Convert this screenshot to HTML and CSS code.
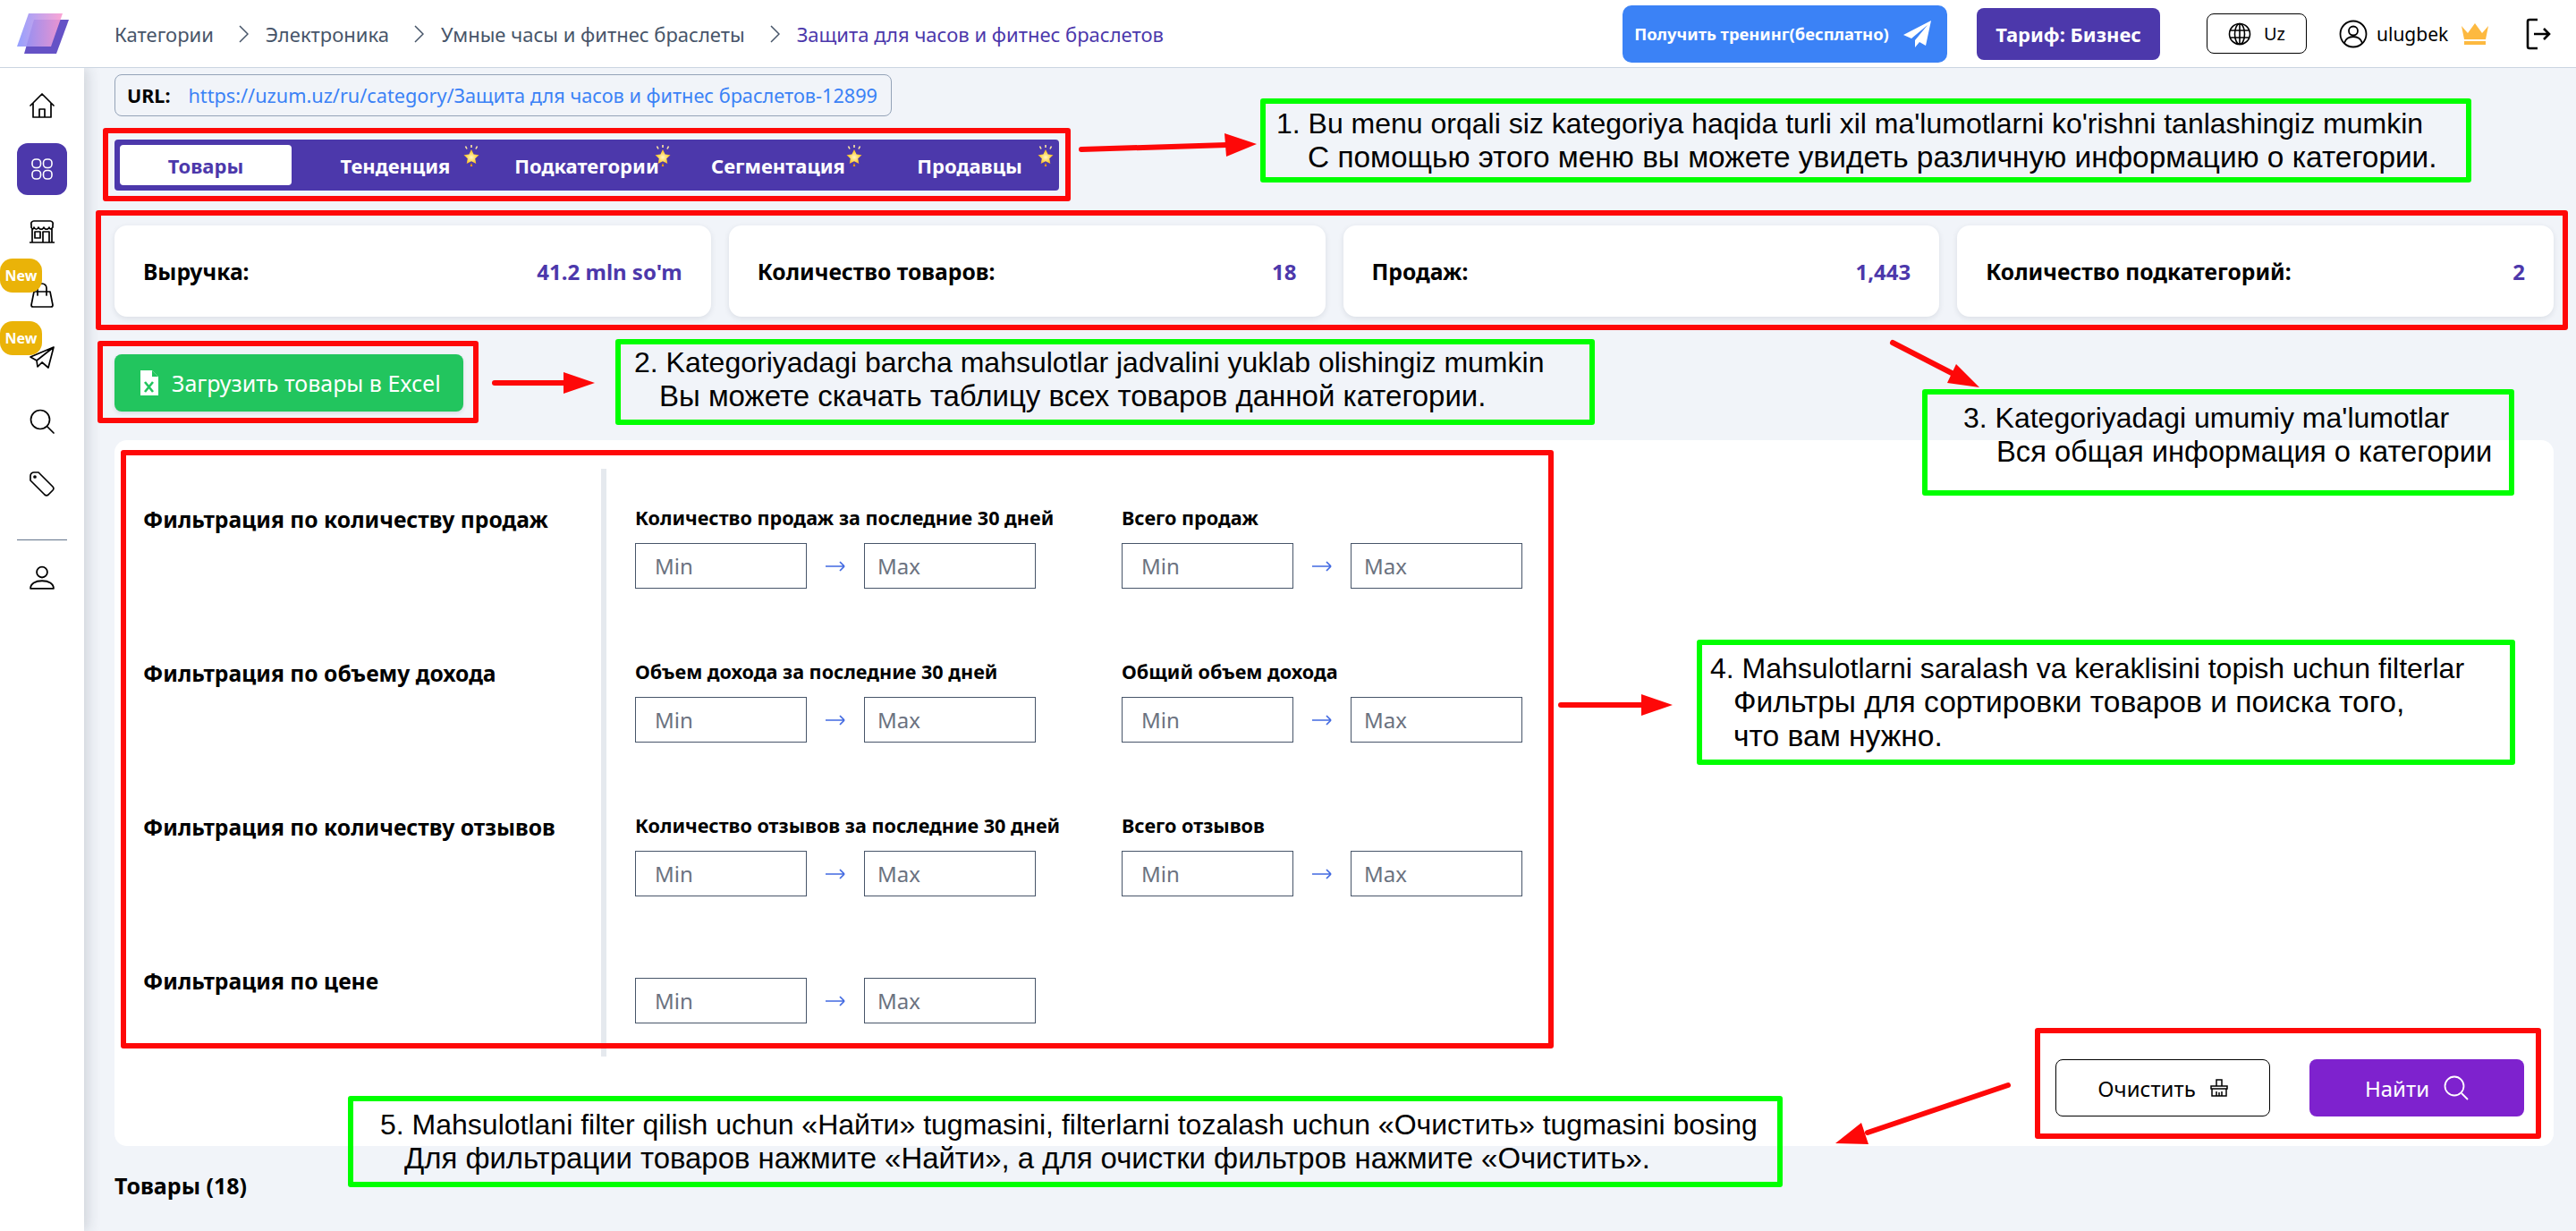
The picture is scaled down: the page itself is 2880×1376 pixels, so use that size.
FILE: index.html
```html
<!DOCTYPE html>
<html lang="ru">
<head>
<meta charset="utf-8">
<title>Защита для часов и фитнес браслетов</title>
<link rel="stylesheet" href="styles.css">
</head>
<body>
<svg class="defs" width="0" height="0">
  <defs>
    <linearGradient id="lg" x1="0" x2="1" y1="0" y2="0"><stop offset="0" stop-color="#8896ff"/><stop offset="1" stop-color="#fb9bd0"/></linearGradient>
    <radialGradient id="sg" cx=".5" cy=".55" r=".6"><stop offset="0" stop-color="#fff6c8"/><stop offset=".55" stop-color="#ffd54a"/><stop offset="1" stop-color="#f59e0b"/></radialGradient>
    <symbol id="star" viewBox="0 0 20 24">
      <path d="M10 5l2.6 5.4 5.9.8-4.3 4 1.1 5.8L10 18.2 4.7 21l1.1-5.8-4.3-4 5.9-.8z" fill="url(#sg)"/>
      <path d="M10 0v3M3.5 1.5l1.5 3M16.5 1.5l-1.5 3" stroke="#ffe9a0" stroke-width="1.6" fill="none"/>
      <path d="M10 20l1.3 4H8.7z" fill="#f59e0b"/>
    </symbol>
    <symbol id="rarrow" viewBox="0 0 22 12">
      <path d="M0 6h21M16 1l5 5" stroke="#4169e1" stroke-width="1.7" fill="none"/>
      <path d="M21 6l-5 5" stroke="#4169e1" stroke-width="1.7" fill="none"/>
    </symbol>
  </defs>
</svg>
<div class="page">
  <header class="topbar">
    <svg class="logo" viewBox="0 0 58 45"><path d="M19 7H58L44 45H8Z" fill="#6552c6"/><path d="M13 0H51L38 37H0Z" fill="url(#lg)" opacity=".9"/></svg>
    <nav class="crumbs">
      <span>Категории</span>
      <svg class="chev" viewBox="0 0 12 20"><path d="M2 1l9 9-9 9"/></svg>
      <span>Электроника</span>
      <svg class="chev" viewBox="0 0 12 20"><path d="M2 1l9 9-9 9"/></svg>
      <span>Умные часы и фитнес браслеты</span>
      <svg class="chev" viewBox="0 0 12 20"><path d="M2 1l9 9-9 9"/></svg>
      <span class="crumb-current">Защита для часов и фитнес браслетов</span>
    </nav>
    <div class="top-actions">
      <a class="btn-training">Получить тренинг(бесплатно)
        <svg class="plane-w" viewBox="0 0 32 32"><path d="M31 1L0 17l9 4L27 6 13 23v8l5-6 7 4z" fill="#fff"/></svg>
      </a>
      <a class="btn-tariff">Тариф: Бизнес</a>
      <a class="btn-lang">
        <svg class="ic-globe" viewBox="0 0 26 26"><circle cx="13" cy="13" r="11.5"/><ellipse cx="13" cy="13" rx="5.5" ry="11.5"/><path d="M13 1.5v23M2 9h22M2 17h22"/></svg>
        Uz
      </a>
      <svg class="ic-user" viewBox="0 0 32 32"><circle cx="16" cy="16" r="14.5"/><circle cx="16" cy="12.5" r="5"/><path d="M6 26c2-6 6-7 10-7s8 1 10 7"/></svg>
      <span class="user-name">ulugbek</span>
      <svg class="ic-crown" viewBox="0 0 30 24"><path d="M0 3l7 8 8-11 8 11 7-8-3 15H3z" fill="#fdb940"/><rect x="3" y="20" width="24" height="4" fill="#fdb940"/></svg>
      <svg class="ic-logout" viewBox="0 0 28 36"><path d="M13 2H4a2 2 0 0 0-2 2v28a2 2 0 0 0 2 2h9M9 18h17M20 12l6 6-6 6"/></svg>
    </div>
  </header>

  <div class="body-row">
    <aside class="sidebar">
      <div class="side-item"><svg class="side-ic" viewBox="0 0 28 28"><path d="M1 14L14 1l13 13M4 11v16h20V11M11 27v-9h6v9"/></svg></div>
      <div class="side-item"><span class="side-active"><svg class="grid-ic" viewBox="0 0 24 24"><rect x="1" y="1" width="9.5" height="9.5" rx="4"/><rect x="13.5" y="1" width="9.5" height="9.5" rx="4"/><rect x="1" y="13.5" width="9.5" height="9.5" rx="4"/><rect x="13.5" y="13.5" width="9.5" height="9.5" rx="4"/></svg></span></div>
      <div class="side-item"><svg class="side-ic" viewBox="0 0 28 26"><path d="M0 25h28M3 25V10M25 25V10M2 5a3 3 0 0 1 3-4h18a3 3 0 0 1 3 4v3c-2 3-4 2-4 0-1 3-5 3-6 0-1 3-5 3-6 0-1 3-4 3-5 0 0 2-2 3-3 0zM15 25V13h7v12M6 13h6v7H6z"/></svg></div>
      <div class="side-item">
        <span class="badge-new">New</span>
        <svg class="side-ic" viewBox="0 0 28 28"><path d="M5 10h18l3 15a2 2 0 0 1-2 2H4a2 2 0 0 1-2-2zM9 14V6a5 5 0 0 1 10 0v8"/></svg>
      </div>
      <div class="side-item">
        <span class="badge-new">New</span>
        <svg class="side-ic" viewBox="0 0 28 26"><path d="M27 1L1 12l7 4zM27 1L8 16l1 7 5-5 7 6z"/></svg>
      </div>
      <div class="side-item"><svg class="side-ic" viewBox="0 0 28 28"><circle cx="12" cy="12" r="10.5"/><path d="M20 20l7 7"/></svg></div>
      <div class="side-item"><svg class="side-ic" viewBox="0 0 28 28"><path d="M1 5a4 4 0 0 1 4-4h5l16 16a3 3 0 0 1 0 4l-5 5a3 3 0 0 1-4 0L1 10z"/><circle cx="6" cy="6" r="1"/></svg></div>
      <hr class="side-sep">
      <div class="side-item side-last"><svg class="side-ic" viewBox="0 0 26 26"><circle cx="13" cy="7" r="5.5"/><path d="M1 24c0-5 5-8 12-8s12 3 12 8z"/></svg></div>
    </aside>

    <main class="content">
      <div class="url-box"><b>URL:</b><a class="url-link">https://uzum.uz/ru/category/Защита для часов и фитнес браслетов-12899</a></div>

      <div class="tabs">
        <a class="tab tab-active">Товары</a>
        <a class="tab">Тенденция<svg class="star"><use href="#star"/></svg></a>
        <a class="tab">Подкатегории<svg class="star"><use href="#star"/></svg></a>
        <a class="tab">Сегментация<svg class="star"><use href="#star"/></svg></a>
        <a class="tab">Продавцы<svg class="star"><use href="#star"/></svg></a>
      </div>

      <section class="stats">
        <div class="stat"><b class="stat-name">Выручка:</b><b class="stat-val">41.2 mln so'm</b></div>
        <div class="stat"><b class="stat-name">Количество товаров:</b><b class="stat-val">18</b></div>
        <div class="stat"><b class="stat-name">Продаж:</b><b class="stat-val">1,443</b></div>
        <div class="stat"><b class="stat-name">Количество подкатегорий:</b><b class="stat-val">2</b></div>
      </section>

      <a class="btn-excel">
        <svg class="ic-excel" viewBox="0 0 20 28"><path d="M0 0h13l7 7v21H0z" fill="#fff"/><path d="M13 0v7h7" fill="#22c55e"/><path d="M5 13l9 11M14 13L5 24" stroke="#22c55e" stroke-width="2.6" fill="none"/></svg>
        Загрузить товары в Excel
      </a>

      <section class="filter-card">
        <div class="f-row">
          <b class="f-title">Фильтрация по количеству продаж</b>
          <div class="f-fields">
            <div class="f-group"><b class="f-label">Количество продаж за последние 30 дней</b><div class="range"><input class="f-input" placeholder="Min"><svg class="range-arrow"><use href="#rarrow"/></svg><input class="f-input f-max" placeholder="Max"></div></div>
            <div class="f-group"><b class="f-label">Всего продаж</b><div class="range"><input class="f-input" placeholder="Min"><svg class="range-arrow"><use href="#rarrow"/></svg><input class="f-input f-max" placeholder="Max"></div></div>
          </div>
        </div>
        <div class="f-row">
          <b class="f-title">Фильтрация по объему дохода</b>
          <div class="f-fields">
            <div class="f-group"><b class="f-label">Объем дохода за последние 30 дней</b><div class="range"><input class="f-input" placeholder="Min"><svg class="range-arrow"><use href="#rarrow"/></svg><input class="f-input f-max" placeholder="Max"></div></div>
            <div class="f-group"><b class="f-label">Общий объем дохода</b><div class="range"><input class="f-input" placeholder="Min"><svg class="range-arrow"><use href="#rarrow"/></svg><input class="f-input f-max" placeholder="Max"></div></div>
          </div>
        </div>
        <div class="f-row">
          <b class="f-title">Фильтрация по количеству отзывов</b>
          <div class="f-fields">
            <div class="f-group"><b class="f-label">Количество отзывов за последние 30 дней</b><div class="range"><input class="f-input" placeholder="Min"><svg class="range-arrow"><use href="#rarrow"/></svg><input class="f-input f-max" placeholder="Max"></div></div>
            <div class="f-group"><b class="f-label">Всего отзывов</b><div class="range"><input class="f-input" placeholder="Min"><svg class="range-arrow"><use href="#rarrow"/></svg><input class="f-input f-max" placeholder="Max"></div></div>
          </div>
        </div>
        <div class="f-row f-row-last">
          <b class="f-title">Фильтрация по цене</b>
          <div class="f-fields">
            <div class="f-group"><div class="range"><input class="f-input" placeholder="Min"><svg class="range-arrow"><use href="#rarrow"/></svg><input class="f-input f-max" placeholder="Max"></div></div>
          </div>
        </div>
        <div class="f-actions">
          <a class="btn-clear">Очистить
            <svg class="ic-broom" viewBox="0 0 20 20"><path d="M7 8V1h6v7M1 8h18v3H1zM2 11v8h16v-8M7 19v-5M10 19v-4M13 19v-5"/></svg>
          </a>
          <a class="btn-find">Найти
            <svg class="ic-find" viewBox="0 0 28 28"><circle cx="12" cy="12" r="10.5"/><path d="M20 20l7 7"/></svg>
          </a>
        </div>
      </section>

      <h2 class="list-title">Товары (18)</h2>
    </main>
  </div>

  <!-- Annotation layer drawn over the screenshot -->
  <div class="note-red r1"></div>
  <div class="note-red r2"></div>
  <div class="note-red r3"></div>
  <div class="note-red r4"></div>
  <div class="note-red r5"></div>

  <svg class="arrows" viewBox="0 0 2880 1376">
    <path d="M1209 167L1372 162"/><polygon points="1369,149 1405,161 1371,175"/>
    <path d="M553 428H632"/><polygon points="630,416 665,428 630,440"/>
    <path d="M2116 383L2184 418"/><polygon points="2187,407 2213,433 2177,428"/>
    <path d="M1745 788H1838"/><polygon points="1835,776 1870,788 1835,800"/>
    <path d="M2245 1213L2088 1266"/><polygon points="2081,1255 2052,1278 2089,1279"/>
  </svg>

  <div class="note-green g1"><p>1. Bu menu orqali siz kategoriya haqida turli xil ma'lumotlarni ko'rishni tanlashingiz mumkin</p><p class="i1">С помощью этого меню вы можете увидеть различную информацию о категории.</p></div>
  <div class="note-green g2"><p>2. Kategoriyadagi barcha mahsulotlar jadvalini yuklab olishingiz mumkin</p><p class="i2">Вы можете скачать таблицу всех товаров данной категории.</p></div>
  <div class="note-green g3"><p>3. Kategoriyadagi umumiy ma'lumotlar</p><p class="i3">Вся общая информация о категории</p></div>
  <div class="note-green g4"><p>4. Mahsulotlarni saralash va keraklisini topish uchun filterlar</p><p class="i4">Фильтры для сортировки товаров и поиска того,</p><p class="i4">что вам нужно.</p></div>
  <div class="note-green g5"><p>5. Mahsulotlani filter qilish uchun «Найти» tugmasini, filterlarni tozalash uchun «Очистить» tugmasini bosing</p><p class="i5">Для фильтрации товаров нажмите «Найти», а для очистки фильтров нажмите «Очистить».</p></div>
</div>
</body>
</html>
```
FILE: styles.css
```css
* { box-sizing: border-box; }
html, body { margin: 0; padding: 0; }
body { width: 2880px; height: 1376px; overflow: hidden; background: #f1f4f9; font-family: "Noto Sans", "Open Sans", sans-serif; color: #000; }
.defs { position: absolute; }
.page { position: relative; width: 2880px; height: 1376px; overflow: hidden; display: flex; flex-direction: column; }

.topbar { height: 76px; flex: none; background: #fff; border-bottom: 1px solid #cbd5e1; display: flex; align-items: center; position: relative; z-index: 2; padding-left: 19px; padding-right: 28px; }
.logo { width: 58px; height: 45px; flex: none; }
.crumbs { display: flex; align-items: center; margin-left: 51px; font-size: 22px; color: #475569; }
.chev { width: 12px; height: 20px; fill: none; stroke: #475569; stroke-width: 1.5; margin: 0 19px 0 27px; }
.crumb-current { color: #4c38ab; }
.top-actions { margin-left: auto; display: flex; align-items: center; }
.btn-training { width: 363px; height: 64px; background: #3b82f6; color: #fff; font-weight: 700; font-size: 18.4px; border-radius: 10px; display: flex; align-items: center; justify-content: center; gap: 16px; padding-right: 4px; }
.plane-w { width: 32px; height: 32px; }
.btn-tariff { width: 205px; height: 58px; margin-left: 33px; background: #4c38ab; color: #fff; font-weight: 700; font-size: 22px; border-radius: 8px; display: flex; align-items: center; justify-content: center; }
.btn-lang { width: 112px; height: 45px; margin-left: 52px; background: #fff; border: 1px solid #000; border-radius: 8px; font-size: 20px; display: flex; align-items: center; justify-content: center; gap: 14px; }
.ic-globe { width: 26px; height: 26px; fill: none; stroke: #000; stroke-width: 1.6; }
.ic-user { width: 32px; height: 32px; margin-left: 36px; fill: none; stroke: #000; stroke-width: 1.8; }
.user-name { font-size: 21px; margin-left: 10px; width: 84px; }
.ic-crown { width: 30px; height: 24px; margin-left: 11px; }
.ic-logout { width: 28px; height: 36px; margin-left: 42px; fill: none; stroke: #000; stroke-width: 2.6; }

.body-row { flex: 1; display: flex; min-height: 0; }
.sidebar { width: 94px; flex: none; background: #fff; box-shadow: 4px 0 14px rgba(30, 41, 59, .16); padding-top: 7px; display: flex; flex-direction: column; position: relative; z-index: 1; }
.side-item { height: 70.5px; flex: none; display: flex; align-items: center; justify-content: center; position: relative; }
.side-ic { width: 28px; height: 28px; fill: none; stroke: #000; stroke-width: 1.7; stroke-linejoin: round; stroke-linecap: round; }
.side-active { width: 56px; height: 58px; margin-left: -1px; background: #4c38ab; border-radius: 12px; display: flex; align-items: center; justify-content: center; }
.grid-ic { width: 24px; height: 24px; fill: none; stroke: #fff; stroke-width: 1.6; }
.badge-new { position: absolute; left: 0; top: -6px; width: 47px; height: 38px; background: #eab308; color: #fff; font-weight: 700; font-size: 16px; border-radius: 14px; display: flex; align-items: center; justify-content: center; z-index: 1; }
.side-sep { width: 56px; height: 1px; margin: 26px auto 0; border: 0; background: #64748b; flex: none; }
.side-last { margin-top: 7px; }

.content { flex: 1; min-width: 0; padding: 7px 25px 0 34px; }
.url-box { width: 869px; height: 47px; border: 1px solid #94a3b8; border-radius: 8px; display: flex; align-items: center; gap: 20px; padding-left: 13px; font-size: 21.5px; white-space: nowrap; }
.url-link { color: #3b82f6; font-size: 21.7px; }

.tabs { width: 1056px; height: 57px; margin-top: 26px; background: #4c38ab; border-radius: 4px; padding: 6px; display: flex; align-items: center; color: #fff; font-weight: 700; font-size: 22px; position: relative; }
.tab { position: relative; display: flex; align-items: center; justify-content: center; height: 45px; white-space: nowrap; width: 214px; flex: none; }
.tab-active { width: 192px; background: #fff; color: #4c38ab; border-radius: 4px; margin-right: 9px; }
.star { position: absolute; left: 182px; top: 0; width: 20px; height: 24px; }

.stats { margin-top: 39px; display: grid; grid-template-columns: repeat(4, 1fr); gap: 20px; }
.stat { height: 102px; background: #fff; border-radius: 14px; padding: 0 32px; display: flex; align-items: center; justify-content: space-between; font-size: 24px; box-shadow: 0 2px 6px rgba(30, 41, 59, .1); }
.stat-name { font-size: 24.7px; }
.stat-val { color: #4c38ab; }

.btn-excel { width: 390px; height: 64px; margin-top: 42px; background: #22c55e; border-radius: 8px; color: #fff; font-size: 25px; display: flex; align-items: center; padding-left: 29px; gap: 15px; box-shadow: 0 2px 4px rgba(30, 41, 59, .12); }
.ic-excel { width: 20px; height: 28px; }

.filter-card { margin-top: 32px; height: 789px; background: #fff; border-radius: 14px; padding-top: 32px; display: flex; flex-direction: column; }
.f-row { height: 172px; flex: none; display: grid; grid-template-columns: 544px 1fr; }
.f-row-last { height: 141px; }
.f-title { padding: 44px 0 0 32px; font-size: 24.7px; line-height: 26px; }
.f-fields { border-left: 6px solid #e5e9ee; padding: 42px 0 0 32px; display: flex; gap: 96px; }
.f-row-last .f-fields { padding-top: 53px; }
.f-group { width: 448px; flex: none; display: flex; flex-direction: column; gap: 15px; }
.f-label { font-size: 21.6px; line-height: 26px; white-space: nowrap; }
.range { display: flex; align-items: center; justify-content: space-between; }
.f-input { width: 192px; height: 51px; border: 1px solid #475569; border-radius: 0; padding: 0 21px; font: 24px "Noto Sans", sans-serif; background: #fff; }
.f-max { padding-left: 14px; }
.f-input::placeholder { color: #6b7280; opacity: 1; }
.range-arrow { width: 22px; height: 12px; flex: none; }
.f-actions { display: flex; justify-content: flex-end; gap: 44px; padding-right: 33px; margin-top: 3px; }
.btn-clear, .btn-find { width: 240px; height: 64px; border-radius: 8px; font-size: 24px; display: flex; align-items: center; justify-content: center; gap: 16px; }
.btn-clear { background: #fff; border: 1px solid #000; }
.btn-find { background: #7e22ce; color: #fff; }
.ic-broom { width: 20px; height: 20px; fill: none; stroke: #000; stroke-width: 1.5; }
.ic-find { width: 28px; height: 28px; fill: none; stroke: #fff; stroke-width: 1.8; }
.list-title { margin: 29px 0 0; font-size: 25px; font-weight: 700; line-height: 30px; }

/* Annotation layer */
.note-red { position: absolute; border: 6px solid #fe0808; border-radius: 3px; z-index: 3; }
.r1 { left: 115px; top: 143px; width: 1082px; height: 82px; }
.r2 { left: 107px; top: 235px; width: 2764px; height: 134px; }
.r3 { left: 109px; top: 381px; width: 426px; height: 92px; }
.r4 { left: 135px; top: 503px; width: 1602px; height: 669px; }
.r5 { left: 2275px; top: 1149px; width: 566px; height: 124px; }
.arrows { position: absolute; left: 0; top: 0; width: 2880px; height: 1376px; z-index: 3; pointer-events: none; }
.arrows path { fill: none; stroke: #fe0808; stroke-width: 6; stroke-linecap: round; }
.arrows polygon { fill: #fe0808; }
.note-green { position: absolute; z-index: 3; border: 6px solid #0f0; border-radius: 3px; font-family: "Liberation Sans", Arial, sans-serif; font-size: 32px; line-height: 38px; display: flex; flex-direction: column; justify-content: center; white-space: nowrap; }
.note-green p { margin: 0; }
.g1 { left: 1409px; top: 110px; width: 1354px; height: 94px; padding-left: 12px; }
.i1 { padding-left: 35px; font-size: 33.4px; }
.g2 { left: 688px; top: 379px; width: 1095px; height: 96px; padding-left: 15px; padding-bottom: 6px; }
.i2 { padding-left: 28px; font-size: 33px; }
.g3 { left: 2149px; top: 435px; width: 662px; height: 119px; padding-left: 40px; padding-top: 7px; justify-content: flex-start; }
.i3 { padding-left: 37px; font-size: 32.7px; }
.g4 { left: 1897px; top: 715px; width: 915px; height: 140px; padding-left: 9px; }
.i4 { padding-left: 26px; font-size: 33.6px; }
.g5 { left: 389px; top: 1225px; width: 1604px; height: 102px; padding-left: 30px; }
.i5 { padding-left: 27px; font-size: 32.9px; }
```
